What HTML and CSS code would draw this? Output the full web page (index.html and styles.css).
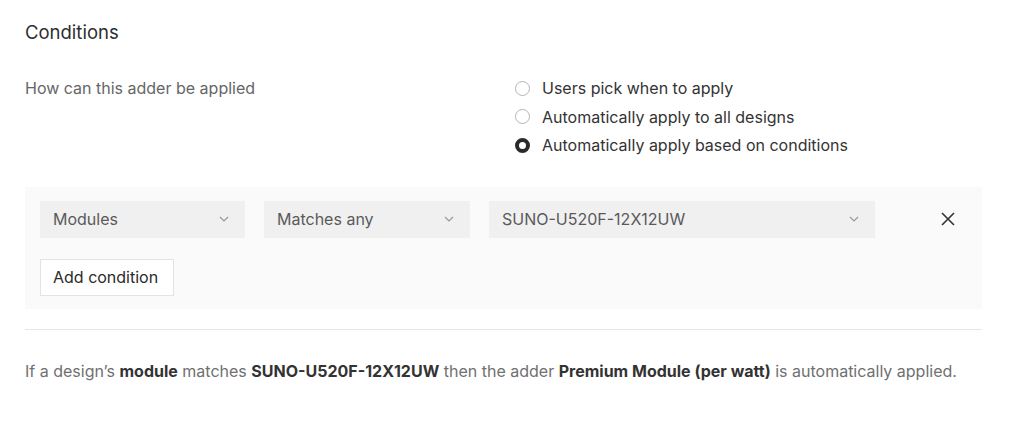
FILE: index.html
```html
<!DOCTYPE html>
<html>
<head>
<meta charset="utf-8">
<link rel="stylesheet" href="styles.css">
</head>
<body>
<div class="page">
  <h2 class="title">Conditions</h2>
  <div class="apply-row">
    <div class="apply-label">How can this adder be applied</div>
    <div class="radios">
      <label class="radio"><span class="dot"></span>Users pick when to apply</label>
      <label class="radio"><span class="dot"></span>Automatically apply to all designs</label>
      <label class="radio"><span class="dot checked"></span>Automatically apply based on conditions</label>
    </div>
  </div>
  <div class="panel">
    <div class="cond-row">
      <div class="select s1"><span>Modules</span><svg class="chev" viewBox="0 0 10 6" width="10" height="6"><path d="M1 1l4 4 4-4" fill="none" stroke="#999" stroke-width="1.2"/></svg></div>
      <div class="select s2"><span>Matches any</span><svg class="chev" viewBox="0 0 10 6" width="10" height="6"><path d="M1 1l4 4 4-4" fill="none" stroke="#999" stroke-width="1.2"/></svg></div>
      <div class="select s3"><span>SUNO-U520F-12X12UW</span><svg class="chev" viewBox="0 0 10 6" width="10" height="6"><path d="M1 1l4 4 4-4" fill="none" stroke="#999" stroke-width="1.2"/></svg></div>
      <svg class="close" viewBox="0 0 14 14" width="14" height="14"><path d="M1 1l12 12M13 1L1 13" stroke="#333" stroke-width="1.6" fill="none"/></svg>
    </div>
    <button class="add-btn">Add condition</button>
  </div>
  <div class="divider"></div>
  <p class="summary">If a design’s <b>module</b> matches <b>SUNO-U520F-12X12UW</b> then the adder <b>Premium Module (per watt)</b> is automatically applied.</p>
</div>
</body>
</html>
```
FILE: styles.css
```css
* { box-sizing: border-box; }
body {
  margin: 0;
  background: #fff;
  font-family: Inter, "Noto Sans", sans-serif;
  color: #333;
}
.page {
  padding: 22px 42px 0 25px;
}
.title {
  margin: 0;
  font-size: 18.5px;
  font-weight: 400;
  color: #2e2e2e;
  line-height: 20px;
}
.apply-row {
  display: flex;
  margin-top: 32px;
}
.apply-label {
  width: 489px;
  font-size: 16px;
  color: #666;
  line-height: 28.5px;
}
.radios {
  display: flex;
  flex-direction: column;
}
.radio {
  display: flex;
  align-items: center;
  height: 28.5px;
  font-size: 16px;
  color: #333;
}
.dot {
  width: 15px;
  height: 15px;
  border-radius: 50%;
  border: 1.5px solid #b5b5b5;
  margin-right: 12px;
  margin-left: 1px;
}
.dot.checked {
  border: 4.5px solid #2a2a2a;
}
.panel {
  margin-top: 27px;
  background: #fafafa;
  padding: 14px 15px 13px 15px;
  width: 957px;
}
.cond-row {
  display: flex;
  align-items: center;
  gap: 19px;
}
.select {
  height: 37px;
  background: #f0f0f0;
  display: flex;
  align-items: center;
  justify-content: space-between;
  padding: 0 16px 0 13px;
  font-size: 16px;
  color: #5a5a5a;
}
.s1 { width: 205px; }
.s2 { width: 206px; }
.s3 { width: 386px; }
.chev { flex: none; }
.close { margin-left: 47px; }
.add-btn {
  margin-top: 21px;
  height: 37px;
  width: 134px;
  background: #fff;
  border: 1px solid #e3e3e3;
  font-family: inherit;
  font-size: 16px;
  color: #2a2a2a;
  padding: 0 0 0 12px;
  text-align: left;
}
.divider {
  margin-top: 20px;
  width: 957px;
  height: 1px;
  background: #e6e6e6;
}
.summary {
  margin: 31px 0 0;
  font-size: 16px;
  color: #707070;
  line-height: 20px;
  white-space: nowrap;
}
.summary b {
  color: #333;
  font-weight: 700;
}
```
